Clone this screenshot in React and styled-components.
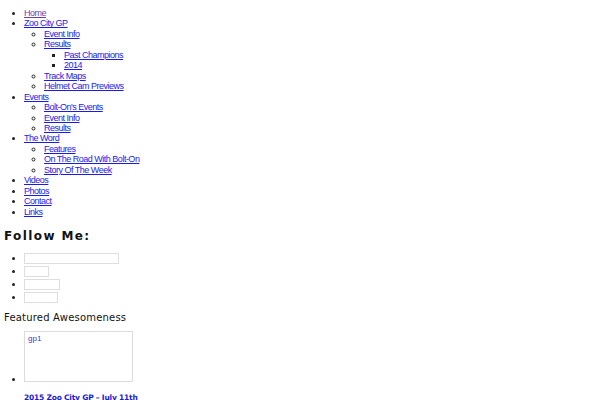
import styled, { createGlobalStyle } from "styled-components";

const Global = createGlobalStyle`
  body {
    margin: 0;
    background: #ffffff;
    font-family: "Liberation Sans", Arial, sans-serif;
    color: #222;
  }
`;

const menu = [
  { label: "Home", visited: true },
  {
    label: "Zoo City GP",
    children: [
      { label: "Event Info" },
      { label: "Results", children: [{ label: "Past Champions" }, { label: "2014" }] },
      { label: "Track Maps" },
      { label: "Helmet Cam Previews" },
    ],
  },
  {
    label: "Events",
    children: [{ label: "Bolt-On's Events" }, { label: "Event Info" }, { label: "Results" }],
  },
  {
    label: "The Word",
    children: [
      { label: "Features" },
      { label: "On The Road With Bolt-On" },
      { label: "Story Of The Week" },
    ],
  },
  { label: "Videos" },
  { label: "Photos" },
  { label: "Contact" },
  { label: "Links" },
];

const social = [95, 25, 36, 34];

const Page = styled.div`
  padding: 8px 0 0 0;
`;

const Menu = styled.ul`
  margin: 0;
  padding-left: ${(p) => (p.$level === 0 ? 24 : 20)}px;
  list-style-type: ${(p) => ["disc", "circle", "square"][p.$level]};
  font-size: 9px;
  line-height: 10.45px;
  letter-spacing: -0.5px;
`;

const Link = styled.a`
  color: ${(p) => (p.$visited ? "#6b3fb0" : "#1a1aee")};
  text-decoration: underline;
`;

const Heading = styled.h3`
  margin: ${(p) => (p.$small ? "8px 0 8px" : "12px 0 9px")};
  padding-left: 4px;
  font-family: "DejaVu Sans", sans-serif;
  font-size: ${(p) => (p.$small ? "10px" : "12px")};
  font-weight: ${(p) => (p.$small ? 400 : 700)};
  letter-spacing: ${(p) => (p.$small ? "0.2px" : "1.4px")};
  color: #111;
`;

const Plain = styled.ul`
  margin: 0;
  padding-left: 24px;
  list-style: disc;
  font-size: 9px;
`;

const SocialItem = styled.li`
  height: 13px;
  line-height: 13px;
`;

const Placeholder = styled.span`
  display: inline-block;
  vertical-align: middle;
  box-sizing: border-box;
  width: ${(p) => p.$w}px;
  height: 11px;
  border: 1px solid #dedede;
`;

const FeatureItem = styled.li`
  line-height: 10px;
`;

const FeatureImg = styled.span`
  display: inline-block;
  overflow: hidden;
  box-sizing: border-box;
  width: 109px;
  height: 51px;
  border: 1px solid #dcdcdc;
  padding: 2px 3px;
  font-size: 8px;
  line-height: 10px;
  color: #3a3acc;
  vertical-align: baseline;
`;

const FeatureTitle = styled.a`
  display: block;
  margin-top: 9px;
  font-family: "DejaVu Sans", sans-serif;
  font-weight: 700;
  font-size: 7.5px;
  letter-spacing: -0.2px;
  color: #1a1acc;
  text-decoration: none;
`;

const Tree = ({ items, level }) => (
  <Menu $level={level}>
    {items.map((it, i) => (
      <li key={i}>
        <Link href="#" $visited={it.visited}>
          {it.label}
        </Link>
        {it.children && <Tree items={it.children} level={level + 1} />}
      </li>
    ))}
  </Menu>
);

export default function App() {
  return (
    <Page>
      <Global />
      <Tree items={menu} level={0} />
      <Heading>Follow Me:</Heading>
      <Plain>
        {social.map((w, i) => (
          <SocialItem key={i}>
            <Placeholder $w={w} />
          </SocialItem>
        ))}
      </Plain>
      <Heading $small>Featured Awesomeness</Heading>
      <Plain>
        <FeatureItem>
          <FeatureImg>gp1</FeatureImg>
          <FeatureTitle href="#">2015 Zoo City GP – July 11th</FeatureTitle>
        </FeatureItem>
      </Plain>
    </Page>
  );
}
